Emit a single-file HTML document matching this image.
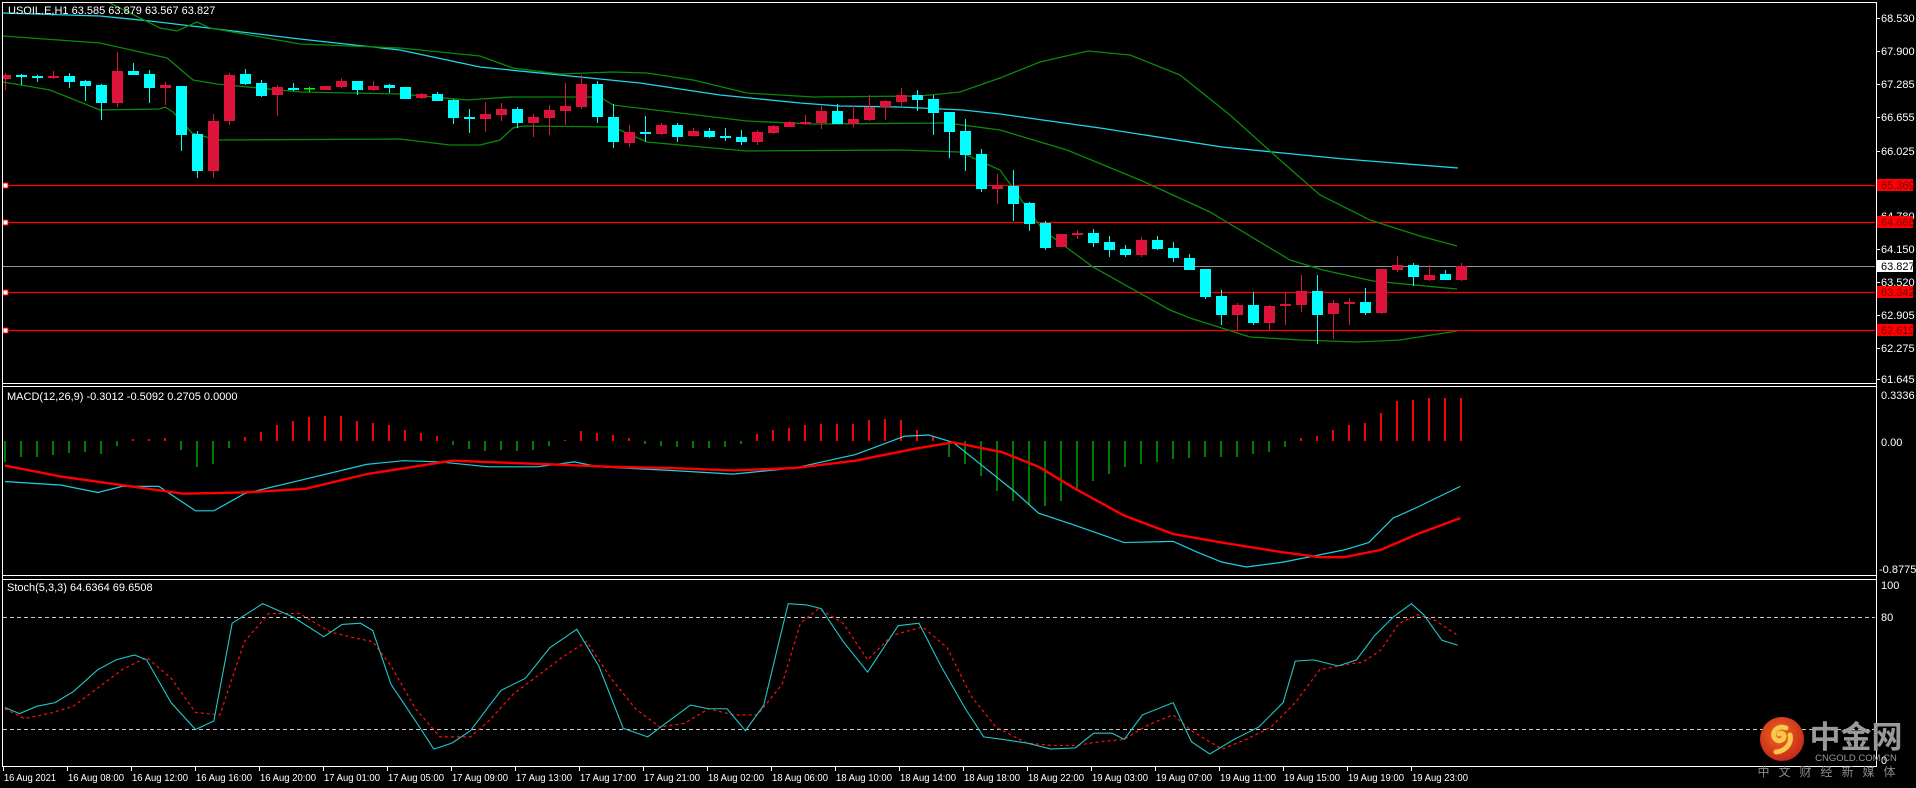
<!DOCTYPE html>
<html><head><meta charset="utf-8"><style>
html,body{margin:0;padding:0;background:#000;width:1916px;height:788px;overflow:hidden}
svg text{font-family:"Liberation Sans","Noto Sans CJK SC",sans-serif}
</style></head><body>
<svg id="s" width="1916" height="788" xmlns="http://www.w3.org/2000/svg" style="display:block">
<rect width="1916" height="788" fill="#000"/>
<defs>
<clipPath id="cm"><rect x="3" y="3" width="1872" height="380"/></clipPath>
<clipPath id="cd"><rect x="3" y="387" width="1872" height="188"/></clipPath>
<clipPath id="cs"><rect x="3" y="580" width="1872" height="186"/></clipPath>
<radialGradient id="lg" cx="0.45" cy="0.4" r="0.6"><stop offset="0" stop-color="#f06a20"/><stop offset="1" stop-color="#c8281a"/></radialGradient>
</defs>
<g id="main" clip-path="url(#cm)"></g>
<g id="macd" clip-path="url(#cd)"></g>
<g id="stoch" clip-path="url(#cs)"></g>
<g id="fg"></g>
</svg>
<script>
var NS="http://www.w3.org/2000/svg";
function el(p,t,a,txt){var e=document.createElementNS(NS,t);for(var k in a)e.setAttribute(k,a[k]);if(txt!==undefined)e.textContent=txt;p.appendChild(e);return e;}
var M=document.getElementById('main'),D=document.getElementById('macd'),S=document.getElementById('stoch'),F=document.getElementById('fg');
function pl(g,pts,col,w,dash){var a={points:pts.map(function(p){return p[0]+','+p[1]}).join(' '),fill:'none',stroke:col,'stroke-width':w||1};if(dash)a['stroke-dasharray']=dash;el(g,'polyline',a);}
[185,222,292,330].forEach(function(y){el(M,'line',{x1:3,y1:y+.5,x2:1876,y2:y+.5,stroke:'#ff0000','stroke-width':1.2});el(M,'rect',{x:3,y:y-2,width:5,height:5,fill:'#fff',stroke:'#f00','stroke-width':1});});
el(M,'line',{x1:3,y1:266.5,x2:1876,y2:266.5,stroke:'#8a96a6','stroke-width':1});
pl(M,[[3,13],[100,16],[150,21],[200,27],[300,39],[400,50],[480,67],[560,75],[600,79],[640,83],[680,89],[720,95],[760,99],[800,103],[840,106],[900,107],[963,110],[1000,114],[1100,128],[1222,147],[1344,159],[1458,168]],'#1fd8e8',1.3);
var gc='#0a8a0a';
pl(M,[[95,-2],[110,3],[160,28],[177,31],[197,22],[210,28],[300,44],[400,48],[480,56],[513,68],[560,74],[613,72],[647,73],[693,80],[747,93],[813,97],[920,96],[960,92],[980,85],[1000,78],[1040,62],[1088,51],[1130,55],[1180,75],[1230,115],[1280,160],[1320,195],[1370,220],[1420,236],[1457,246]],gc,1.3);
pl(M,[[3,36],[100,43],[167,58],[193,80],[217,84],[300,92],[400,94],[467,100],[510,97],[600,97],[613,105],[680,113],[747,121],[813,124],[947,123],[1000,130],[1067,150],[1140,180],[1210,212],[1290,260],[1323,270],[1373,281],[1457,289]],gc,1.3);
pl(M,[[3,82],[50,90],[100,110],[160,109],[165,107],[173,112],[192,133],[217,140],[400,139],[450,145],[480,145],[500,140],[513,128],[523,126],[613,127],[647,142],[713,148],[747,151],[900,150],[960,152],[1000,170],[1043,230],[1093,267],[1170,310],[1190,318],[1250,337],[1300,340],[1357,342],[1400,340],[1457,331]],gc,1.3);
var C=[[75,79,73,90,'r'],[75,77,74,85,'c'],[76,78,75,82,'c'],[76,78,71,79,'r'],[76,82,73,88,'c'],[81,86,80,101,'c'],[85,103,84,120,'c'],[71,103,52,107,'r'],[71,75,63,75,'c'],[74,88,70,103,'c'],[85,88,82,105,'r'],[86,135,86,151,'c'],[134,171,131,178,'c'],[121,171,114,178,'r'],[75,121,73,125,'r'],[74,84,69,85,'c'],[83,96,80,97,'c'],[87,95,85,116,'r'],[88,90,83,91,'c'],[88,89,87,92,'g'],[86,90,86,90,'r'],[81,87,78,88,'r'],[81,90,81,95,'c'],[86,90,81,91,'r'],[85,88,84,93,'c'],[87,99,87,99,'c'],[94,98,93,99,'r'],[94,101,92,101,'c'],[100,118,99,124,'c'],[117,119,109,133,'c'],[114,119,102,132,'r'],[109,115,103,121,'r'],[109,123,107,128,'c'],[117,123,114,137,'r'],[110,118,105,135,'r'],[106,111,83,125,'r'],[84,107,75,109,'r'],[84,117,81,123,'c'],[117,142,104,148,'c'],[132,143,125,147,'r'],[132,134,116,142,'c'],[125,134,123,135,'r'],[125,137,123,142,'c'],[131,136,128,136,'r'],[131,137,128,138,'c'],[136,138,128,141,'c'],[137,142,130,145,'c'],[132,142,130,145,'r'],[126,133,125,134,'r'],[122,127,121,127,'r'],[122,124,115,125,'r'],[111,123,106,129,'r'],[111,124,104,124,'c'],[119,124,106,127,'r'],[107,120,95,121,'r'],[101,107,100,120,'r'],[95,102,88,106,'r'],[95,100,90,111,'c'],[99,113,95,135,'c'],[112,132,112,158,'c'],[131,155,119,171,'c'],[154,189,149,192,'c'],[185,189,174,204,'r'],[186,204,170,221,'c'],[203,224,202,231,'c'],[223,248,221,250,'c'],[234,247,234,247,'r'],[233,235,230,239,'r'],[233,243,229,247,'c'],[242,250,236,257,'c'],[249,255,245,257,'c'],[240,255,237,257,'r'],[240,249,236,250,'c'],[248,258,242,262,'c'],[258,270,254,270,'c'],[269,297,269,299,'c'],[296,315,290,325,'c'],[305,315,303,330,'r'],[305,323,292,325,'c'],[306,323,305,330,'r'],[304,306,292,325,'r'],[291,305,275,312,'r'],[291,315,275,344,'c'],[303,314,300,339,'r'],[302,304,298,325,'r'],[302,313,288,315,'c'],[269,313,269,314,'r'],[265,270,256,272,'r'],[265,277,263,286,'c'],[275,280,265,281,'r'],[274,280,270,280,'c'],[266,280,263,281,'r']];
var col={r:'#dc143c',c:'#00ffff',g:'#00ff00'};
C.forEach(function(c,i){var x=5+16*i,k=col[c[4]];el(M,'rect',{x:x,y:c[2],width:1,height:c[3]-c[2],fill:k});var h=Math.max(c[1]-c[0],1.5);el(M,'rect',{x:x-5,y:c[0],width:11,height:h,fill:k});});
var H=[-21,-16,-16,-14,-12,-11,-13,-5,2,2,3,-9,-26,-23,-7,4,9,16,20,24,25,25,20,18,16,11,8,5,-4,-8,-10,-9,-10,-9,-5,1,10,8,6,3,-3,-5,-6,-7,-7,-6,-3,7,11,13,16,17,17,17,21,22,21,11,4,-16,-23,-35,-50,-60,-64,-65,-60,-50,-40,-33,-26,-23,-21,-18,-17,-16,-16,-16,-13,-11,-6,3,5,11,16,18,28,40,41,43,43,43];
var Z=441;
H.forEach(function(v,i){var x=5+16*i;el(D,'rect',{x:x-1,y:v>0?Z-v:Z,width:2,height:Math.abs(v)||1,fill:v>0?'#ff0000':'#007a00'});});
function sc(a){return a.map(function(p){return [p[0]*1.222,p[1]*1.222]});}
pl(D,sc([[4,394],[50,397],[80,403],[100,398],[130,398],[160,418],[175,418],[200,404],[250,392],[300,380],[330,377],[360,378],[400,382],[440,382],[470,378],[490,382],[550,385],[600,388],[650,383],[700,372],[740,357],[760,356],[780,362],[800,378],[830,402],[850,420],[880,430],[920,444],[960,443],[980,452],[1000,460],[1020,464],[1050,460],[1070,456],[1100,450],[1120,444],[1140,424],[1160,415],[1195,398]]),'#20d0e0',1.2);
pl(D,sc([[4,381],[50,390],[100,397],[150,404],[200,403],[250,400],[300,388],[370,377],[450,380],[500,382],[550,383],[600,385],[650,383],[700,377],[750,367],[780,362],[820,370],[850,382],[880,400],[920,422],[960,437],[1000,444],[1050,452],[1080,456],[1100,456],[1130,450],[1160,437],[1195,424]]),'#ff0000',2.4);
el(S,'line',{x1:3,y1:617.5,x2:1876,y2:617.5,stroke:'#c8c8c8','stroke-dasharray':'4,3'});
el(S,'line',{x1:3,y1:729.5,x2:1876,y2:729.5,stroke:'#c8c8c8','stroke-dasharray':'4,3'});
pl(S,sc([[4,580],[20,588],[40,584],[60,578],[80,563],[100,548],[120,538],[140,555],[160,583],[180,585],[200,525],[220,502],[245,502],[270,517],[290,522],[305,525],[320,545],[340,580],[360,603],[385,603],[400,590],[420,568],[440,553],[460,538],[480,525],[500,555],[520,580],[540,595],[560,592],[580,580],[600,585],[620,585],[640,560],[655,510],[670,498],[690,510],[710,540],[730,520],[755,513],[775,530],[795,570],[815,595],[840,608],[860,610],[880,610],[900,607],[920,605],[940,593],[960,585],[975,598],[1000,613],[1020,605],[1040,595],[1060,575],[1080,548],[1100,544],[1115,542],[1130,532],[1145,510],[1160,503],[1175,508],[1193,520]]),'#ff1010',1.2,'3,3');
pl(S,sc([[4,579],[16,584],[30,578],[45,575],[60,566],[80,548],[95,540],[110,536],[120,540],[140,575],[160,597],[175,590],[190,510],[215,494],[240,505],[265,521],[280,511],[295,510],[305,516],[320,560],[340,590],[355,613],[370,608],[385,598],[400,578],[410,565],[430,555],[450,530],[472,515],[490,545],[510,596],[530,603],[550,588],[565,577],[580,580],[595,580],[610,598],[625,577],[645,494],[660,495],[672,498],[690,525],[710,550],[735,512],[752,510],[770,545],[790,580],[805,603],[820,605],[840,608],[860,613],[880,612],[895,600],[910,600],[920,605],[935,585],[960,575],[975,607],[990,617],[1010,605],[1030,595],[1050,575],[1060,541],[1075,540],[1095,545],[1110,540],[1125,520],[1140,505],[1155,494],[1165,503],[1180,524],[1193,528]]),'#20c8c8',1.1);
var W='#ffffff';
function ln(x1,y1,x2,y2){el(F,'line',{x1:x1,y1:y1,x2:x2,y2:y2,stroke:W,'stroke-width':1});}
ln(2,2.5,1876,2.5);ln(2.5,2,2.5,767);ln(1876.5,2,1876.5,767);
ln(2,383.5,1876,383.5);ln(2,386.5,1876,386.5);
ln(2,575.5,1876,575.5);ln(2,579.5,1876,579.5);ln(2,766.5,1876,766.5);
function tx(x,y,s,c,sz,anc){return el(F,'text',{x:x,y:y,fill:c||'#fff','font-size':sz||11,'text-anchor':anc||'start'},s);}
tx(8,14,'USOIL.E,H1  63.585 63.879 63.567 63.827');
tx(7,400,'MACD(12,26,9) -0.3012 -0.5092 0.2705 0.0000');
tx(7,591,'Stoch(5,3,3) 64.6364 69.6508');
var PL=[['68.530',18],['67.900',51],['67.285',84],['66.655',117],['66.025',151],['64.780',216],['64.150',249],['63.520',282],['62.905',315],['62.275',348],['61.645',379]];
PL.forEach(function(p){ln(1876,p[1]+.5,1880,p[1]+.5);tx(1881,p[1]+4,p[0]);});
[['65.369',185],['64.666',222],['63.342',292],['62.619',330]].forEach(function(p){el(F,'rect',{x:1877,y:p[1]-6,width:36,height:12,fill:'#ff0000'});tx(1881,p[1]+4,p[0],'#700');});
el(F,'rect',{x:1877,y:260,width:36,height:12,fill:'#fff'});tx(1881,270,'63.827','#000');
tx(1881,399,'0.3336');tx(1881,446,'0.00');tx(1879,573,'-0.8775');
tx(1881,589,'100');tx(1881,621,'80');tx(1881,764,'0');
var TL=['16 Aug 2021','16 Aug 08:00','16 Aug 12:00','16 Aug 16:00','16 Aug 20:00','17 Aug 01:00','17 Aug 05:00','17 Aug 09:00','17 Aug 13:00','17 Aug 17:00','17 Aug 21:00','18 Aug 02:00','18 Aug 06:00','18 Aug 10:00','18 Aug 14:00','18 Aug 18:00','18 Aug 22:00','19 Aug 03:00','19 Aug 07:00','19 Aug 11:00','19 Aug 15:00','19 Aug 19:00','19 Aug 23:00'];
TL.forEach(function(s,k){var x=3+64*k;ln(x+.5,767,x+.5,771);var t=tx(x+1,781,s,'#fff',10.5);t.setAttribute('textLength',k==0?52:56);t.setAttribute('lengthAdjust','spacingAndGlyphs');});
el(F,'circle',{cx:1782,cy:739,r:22,fill:'url(#lg)'});
el(F,'path',{d:'M1786 728 c-8 -3 -14 3 -12 9 c2 5 9 5 10 0 c1 -3 -3 -5 -5 -3 M1790 735 c2 8 -4 16 -14 17',fill:'none',stroke:'#f7c84a','stroke-width':5,'stroke-linecap':'round'});
tx(1856,748,'中金网','#9a9a9a',31,'middle').setAttribute('font-weight','bold');
tx(1856,761,'CNGOLD.COM.CN','#9a9a9a',9.5,'middle');
el(F,'text',{x:1831,y:776,fill:'#8a8a8a','font-size':12,'text-anchor':'middle','letter-spacing':'9'},'中文财经新媒体');
</script>
</body></html>
